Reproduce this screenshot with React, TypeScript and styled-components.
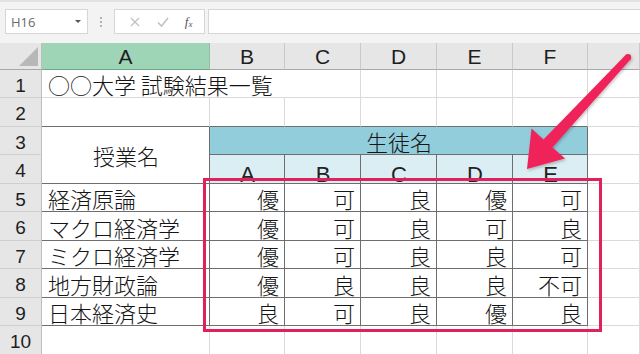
import React from "react";
import styled, { createGlobalStyle } from "styled-components";

const Global = createGlobalStyle`
  html, body { margin: 0; padding: 0; background: #f3f3f3; }
  * { box-sizing: border-box; }
`;

const Page = styled.div`
  position: relative;
  width: 640px;
  height: 354px;
  overflow: hidden;
  background: #f3f3f3;
`;

const Toolbar = styled.div`
  height: 43px;
  display: flex;
  align-items: flex-start;
  padding: 9px 0 0 5px;
  border-top: 2px solid #e2e2e2;
`;

const NameBox = styled.div`
  width: 83px;
  height: 25px;
  margin-top: -2px;
  background: #fff;
  border: 1px solid #d6d6d6;
  display: flex;
  align-items: center;
  justify-content: space-between;
  padding: 0 6px 0 5px;
  font-family: "Open Sans", "Liberation Sans", sans-serif;
  font-size: 13px;
  color: #6a6a6a;
`;

const DropArrow = styled.span`
  width: 0;
  height: 0;
  border-left: 3px solid transparent;
  border-right: 3px solid transparent;
  border-top: 3px solid #555;
`;

const Dots = styled.div`
  width: 26px;
  height: 25px;
  margin-top: -2px;
  display: flex;
  flex-direction: column;
  align-items: center;
  justify-content: center;
  gap: 2px;
  & > i {
    width: 2px;
    height: 2px;
    background: #b4b4b4;
    display: block;
  }
`;

const FxBox = styled.div`
  width: 91px;
  height: 25px;
  margin-top: -2px;
  background: #fff;
  border: 1px solid #d6d6d6;
  display: flex;
  align-items: center;
  justify-content: space-around;
  padding: 0 4px 0 6px;
`;

const FxText = styled.span`
  font-family: "Liberation Serif", serif;
  font-style: italic;
  font-size: 13px;
  color: #555;
  & > sub {
    font-size: 9px;
    vertical-align: -1px;
  }
`;

const Formula = styled.div`
  flex: 1;
  height: 25px;
  margin: -2px -4px 0 3px;
  background: #fff;
  border: 1px solid #d6d6d6;
`;

const Sheet = styled.div`
  display: grid;
  grid-template-columns: 42px 168px 75px 76px 76px 76px 75px 1fr;
  grid-template-rows: 27px 28px 29px 28px 29px 28px 29px 28px 29px 28px 29px;
  background: #fff;
`;

const Corner = styled.div`
  background: #e6e6e6;
  border-right: 1px solid #bdbdbd;
  border-bottom: 1px solid #a8a8a8;
  position: relative;
  &::after {
    content: "";
    position: absolute;
    right: 3px;
    bottom: 3px;
    width: 0;
    height: 0;
    border-left: 19px solid transparent;
    border-bottom: 19px solid #b8b8b8;
  }
`;

const ColHead = styled.div<{ $sel?: boolean }>`
  background: ${(p) => (p.$sel ? "#9fd5b7" : "#e6e6e6")};
  border-right: 1px solid ${(p) => (p.$sel ? "#8cc3a4" : "#c9c9c9")};
  border-bottom: 1px solid ${(p) => (p.$sel ? "#6fa886" : "#a8a8a8")};
  display: flex;
  align-items: center;
  justify-content: center;
  padding-top: 2px;
  font-family: "Liberation Sans", Arial, sans-serif;
  font-size: 21px;
  color: #1e1e1e;
`;

const RowHead = styled.div`
  background: #e6e6e6;
  border-right: 1px solid #bdbdbd;
  border-bottom: 1px solid #cfcfcf;
  display: flex;
  align-items: center;
  justify-content: center;
  padding-top: 4px;
  font-family: "Liberation Sans", Arial, sans-serif;
  font-size: 19px;
  color: #1e1e1e;
`;

type CellProps = {
  $align?: "left" | "right" | "center";
  $valign?: "end" | "center";
  $bg?: string;
  $dr?: boolean;
  $db?: boolean;
  $cs?: number;
  $rs?: number;
};

const Cell = styled.div<CellProps>`
  grid-column: span ${(p) => p.$cs ?? 1};
  grid-row: span ${(p) => p.$rs ?? 1};
  background: ${(p) => p.$bg ?? "#fff"};
  border-right: 1px solid ${(p) => (p.$dr ? "#6e6e6e" : "#dadada")};
  border-bottom: 1px solid ${(p) => (p.$db ? "#6e6e6e" : "#dadada")};
  display: flex;
  align-items: ${(p) => (p.$valign === "center" ? "center" : "flex-end")};
  justify-content: ${(p) =>
    p.$align === "right" ? "flex-end" : p.$align === "center" ? "center" : "flex-start"};
  padding: 0 5px 1px 6px;
  font-family: "Noto Sans CJK JP", "Noto Sans CJK SC", sans-serif;
  font-weight: 300;
  font-size: 22px;
  line-height: 24px;
  color: #151515;
  white-space: nowrap;
  overflow: hidden;
`;

const Letter = styled.span`
  font-family: "Liberation Sans", Arial, sans-serif;
  font-size: 22px;
  line-height: 22px;
  color: #222;
  margin-bottom: -4px;
`;

const Highlight = styled.div`
  position: absolute;
  left: 203px;
  top: 178px;
  width: 399px;
  height: 154px;
  border: 3px solid #e0215c;
  pointer-events: none;
`;

const ArrowLayer = styled.svg`
  position: absolute;
  left: 0;
  top: 0;
  width: 640px;
  height: 354px;
  pointer-events: none;
`;

const data: string[][] = [
  ["経済原論", "優", "可", "良", "優", "可"],
  ["マクロ経済学", "優", "可", "良", "可", "良"],
  ["ミクロ経済学", "優", "可", "良", "良", "可"],
  ["地方財政論", "優", "良", "良", "良", "不可"],
  ["日本経済史", "良", "可", "良", "優", "良"],
];

export default function App() {
  const cols = ["A", "B", "C", "D", "E", "F", ""];
  return (
    <Page>
      <Global />
      <Toolbar>
        <NameBox>
          <span>H16</span>
          <DropArrow />
        </NameBox>
        <Dots>
          <i />
          <i />
          <i />
        </Dots>
        <FxBox>
          <svg width="12" height="12" viewBox="0 0 12 12">
            <path d="M2 2 L10 10 M10 2 L2 10" stroke="#c2c2c2" strokeWidth="1.4" fill="none" />
          </svg>
          <svg width="14" height="12" viewBox="0 0 14 12">
            <path d="M2 6.5 L5.5 10 L12 2" stroke="#c2c2c2" strokeWidth="1.6" fill="none" />
          </svg>
          <FxText>
            f<sub>x</sub>
          </FxText>
        </FxBox>
        <Formula />
      </Toolbar>
      <Sheet>
        <Corner />
        {cols.map((c, i) => (
          <ColHead key={"h" + i} $sel={c === "A"}>
            {c}
          </ColHead>
        ))}

        <RowHead>1</RowHead>
        <Cell $cs={3}>○○大学 試験結果一覧</Cell>
        <Cell />
        <Cell />
        <Cell />
        <Cell />

        <RowHead>2</RowHead>
        {[0, 1, 2, 3, 4, 5].map((i) => (
          <Cell key={"r2" + i} $db />
        ))}
        <Cell />

        <RowHead>3</RowHead>
        <Cell $rs={2} $align="center" $valign="center" $dr $db>
          授業名
        </Cell>
        <Cell $cs={5} $align="center" $bg="#92cddc" $dr $db>
          生徒名
        </Cell>
        <Cell />

        <RowHead>4</RowHead>
        {["A", "B", "C", "D", "E"].map((l) => (
          <Cell key={"l" + l} $align="center" $bg="#daeef3" $dr $db>
            <Letter>{l}</Letter>
          </Cell>
        ))}
        <Cell />

        {data.map((row, r) => (
          <React.Fragment key={"d" + r}>
            <RowHead>{r + 5}</RowHead>
            {row.map((v, i) => (
              <Cell key={i} $align={i === 0 ? "left" : "right"} $dr $db>
                {v}
              </Cell>
            ))}
            <Cell />
          </React.Fragment>
        ))}

        <RowHead>10</RowHead>
        {[0, 1, 2, 3, 4, 5, 6].map((i) => (
          <Cell key={"r10" + i} />
        ))}
      </Sheet>

      <Highlight />
      <ArrowLayer viewBox="0 0 640 354">
        <defs>
          <filter id="sh" x="-20%" y="-20%" width="140%" height="140%">
            <feDropShadow dx="1" dy="1.5" stdDeviation="1.5" floodColor="#000" floodOpacity="0.25" />
          </filter>
        </defs>
        <g filter="url(#sh)" fill="#f0245a">
          <polygon points="625.6,55 630.4,59.4 552.5,147.5 565,158.5 527,169 531.5,128.5 543.5,139.5" />
          <circle cx="628" cy="57.2" r="3.2" />
        </g>
      </ArrowLayer>
    </Page>
  );
}
